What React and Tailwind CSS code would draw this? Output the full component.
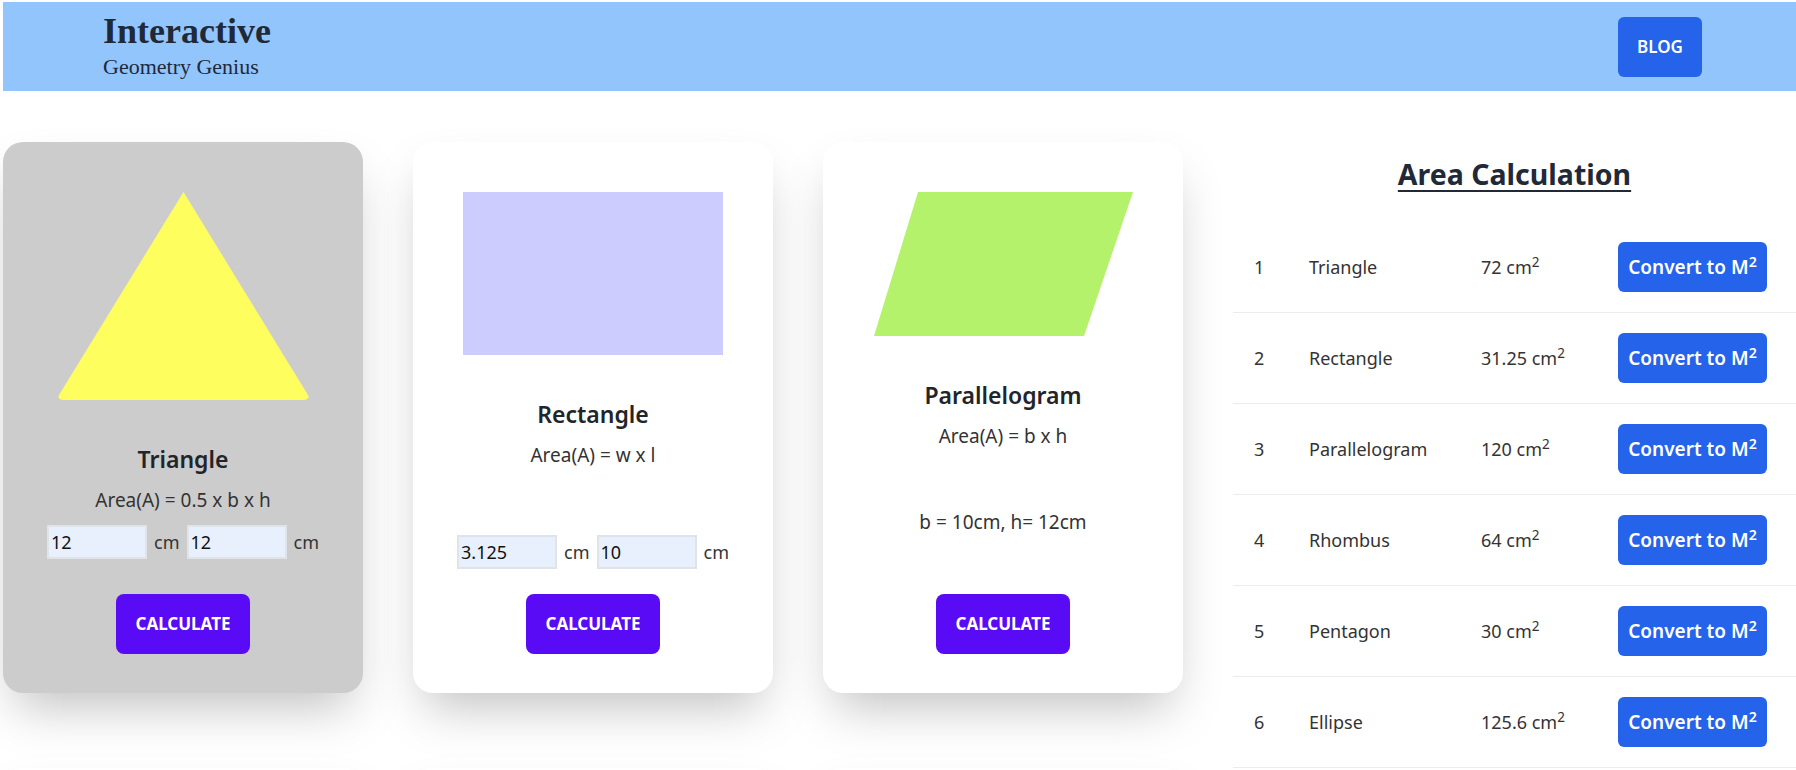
import React from "react";

const font = { fontFamily: '"Noto Sans", "Open Sans", sans-serif' };

function Input({ value }) {
  return (
    <input
      defaultValue={value}
      className="w-[100px] h-[34px] border-2 border-[#e0e3e8] bg-[#e8f0fe] px-[2px] text-[18px] text-[#111] outline-none"
    />
  );
}

function InputsRow({ a, b, className = "" }) {
  return (
    <div className={"flex items-center text-[18px] text-[#333] " + className}>
      <Input value={a} />
      <span className="ml-[7px] mr-[7px]">cm</span>
      <Input value={b} />
      <span className="ml-[7px]">cm</span>
    </div>
  );
}

function CalcButton() {
  return (
    <button className="mt-auto w-[134px] h-[60px] rounded-lg bg-[#5a0bf6] text-white font-bold text-[17px] uppercase">
      Calculate
    </button>
  );
}

const cardCls =
  "h-[551px] w-[360px] rounded-[20px] shadow-2xl flex flex-col items-center pt-[50px] pb-[39px] text-[#212529]";

function Title({ children }) {
  return <h2 className="mt-[43px] h-[32px] leading-[32px] text-[23px] font-semibold text-[#212529]">{children}</h2>;
}

function Formula({ children, className = "mt-[11px]" }) {
  return <p className={"h-[28px] leading-[28px] text-[19px] text-[#333] " + className}>{children}</p>;
}

const rows = [
  ["1", "Triangle", "72"],
  ["2", "Rectangle", "31.25"],
  ["3", "Parallelogram", "120"],
  ["4", "Rhombus", "64"],
  ["5", "Pentagon", "30"],
  ["6", "Ellipse", "125.6"],
];

export default function App() {
  return (
    <div className="min-h-screen bg-white pt-[2px] pl-[3px]" style={font}>
      <header className="h-[89px] bg-[#93c5fd] flex items-start justify-between pl-[100px] pr-[94px]">
        <div className="pt-[11px] text-[#1f2937]" style={{ fontFamily: '"Liberation Serif", serif' }}>
          <div className="text-[36px] font-bold leading-[36px]">Interactive</div>
          <div className="text-[22px] leading-[22px] mt-[7px]">Geometry Genius</div>
        </div>
        <button className="mt-[15px] w-[84px] h-[60px] rounded-md bg-[#2563eb] text-white font-semibold text-[17px]">
          BLOG
        </button>
      </header>

      <main className="flex mt-[51px]">
        <div className="grid grid-cols-[360px_360px_360px] gap-x-[50px] gap-y-[75px]">
          {/* Triangle */}
          <div className={cardCls + " bg-[#cccccc]"}>
            <svg width="253" height="208" viewBox="0 0 253 208">
              <path d="M126.5 0 L251 203 Q253 208 246 208 L7 208 Q0 208 2 203 Z" fill="#fefe5e" />
            </svg>
            <Title>Triangle</Title>
            <Formula>Area(A) = 0.5 x b x h</Formula>
            <InputsRow a="12" b="12" className="mt-[11px]" />
            <CalcButton />
          </div>

          {/* Rectangle */}
          <div className={cardCls + " bg-white"}>
            <div className="w-[260px] h-[163px] bg-[#ccccff]" />
            <Title>Rectangle</Title>
            <Formula>Area(A) = w x l</Formula>
            <InputsRow a="3.125" b="10" className="mt-[66px]" />
            <CalcButton />
          </div>

          {/* Parallelogram */}
          <div className={cardCls + " bg-white"}>
            <svg width="259" height="144" viewBox="0 0 259 144">
              <polygon points="44,0 259,0 210,144 0,144" fill="#b4f26c" />
            </svg>
            <Title>Parallelogram</Title>
            <Formula>Area(A) = b x h</Formula>
            <Formula className="mt-[58px]">b = 10cm, h= 12cm</Formula>
            <CalcButton />
          </div>

          {/* Second row (below the fold) */}
          <div className={cardCls + " bg-white"} />
          <div className={cardCls + " bg-white"} />
          <div className={cardCls + " bg-white"} />
        </div>

        <section className="ml-[50px] flex-1">
          <h1 className="mt-[12px] h-[40px] leading-[40px] text-center text-[28.5px] font-bold text-[#1f2937] underline decoration-2 underline-offset-[5px]">
            Area Calculation
          </h1>
          <div className="mt-[28px]">
            {rows.map(([n, name, v]) => (
              <div key={n} className="flex items-center h-[91px] border-b border-[#ececec] text-[18px] text-[#333]">
                <div className="w-[76px] pl-[21px]">{n}</div>
                <div className="w-[172px]">{name}</div>
                <div className="w-[137px]">
                  {v} cm<sup>2</sup>
                </div>
                <button className="w-[149px] h-[50px] rounded-md bg-[#2563eb] text-white font-semibold text-[19px]">
                  Convert to M<sup>2</sup>
                </button>
              </div>
            ))}
          </div>
        </section>
      </main>
    </div>
  );
}
